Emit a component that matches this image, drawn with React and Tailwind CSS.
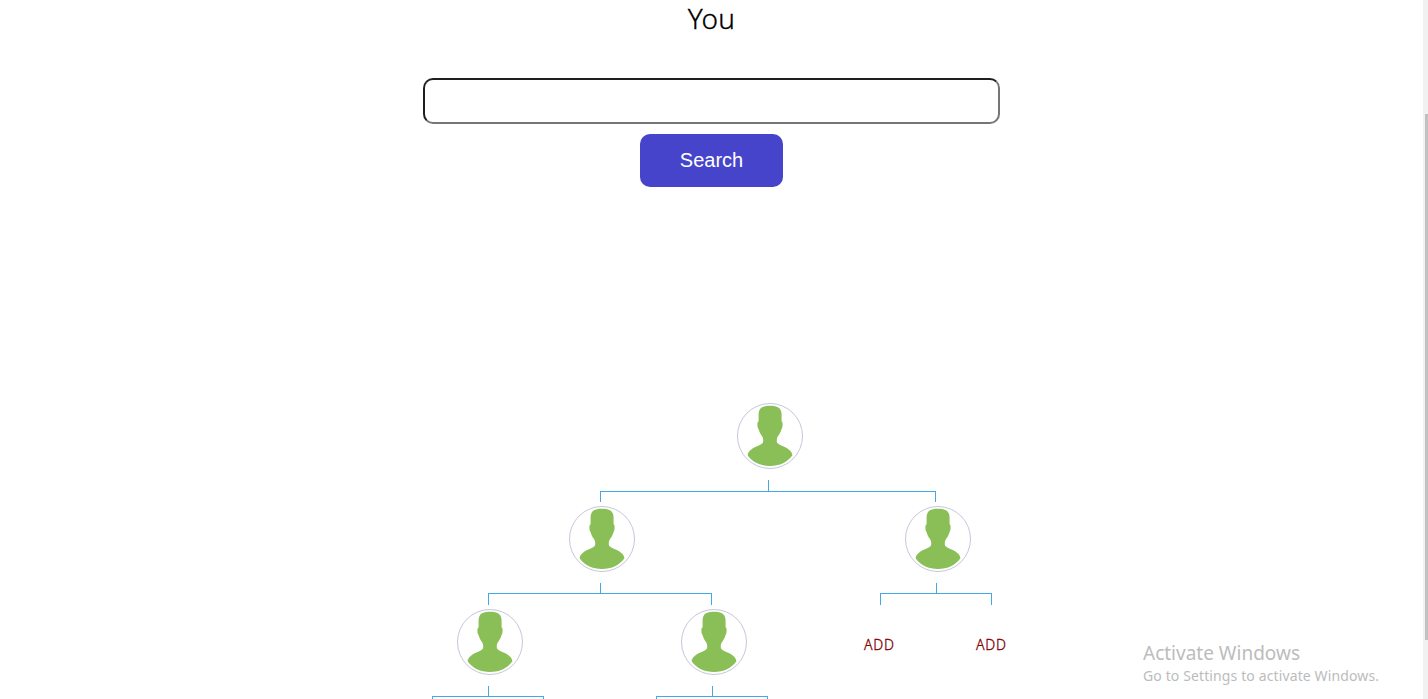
const members = [
  { id: "root", place: "left-[737px] top-[205px]" },
  { id: "left", place: "left-[569px] top-[308px]" },
  { id: "right", place: "left-[905px] top-[308px]" },
  { id: "left-left", place: "left-[457px] top-[411px]" },
  { id: "left-right", place: "left-[681px] top-[411px]" },
];

const openSlots = [
  { id: "right-left", place: "left-[864px] top-[437px]" },
  { id: "right-right", place: "left-[976px] top-[437px]" },
];

function Avatar({ place }) {
  return (
    <div className={`absolute size-[66px] rounded-full border border-[#c4c8dc] bg-white ${place}`}>
      <svg viewBox="1 1 64 64" className="block size-full" aria-hidden="true">
        <path
          fill="#8abf58"
          d="M33 2.8C38.5 2.8 41.4 4 43.1 6.2C44.3 7.9 44.6 9.8 44.6 12V18.2C45.4 18.8 45.7 20 45.6 21.8C45.5 24 45.2 25.2 44.5 26.2C43.8 28.8 42.6 30.8 41.4 32.6C40.2 34.4 39.8 35.4 39.8 37V38.2C39.8 39.8 41.3 41.2 44.2 42.6C47.6 44.1 50.4 45.2 52.6 47.2C54.2 48.6 55.2 50.2 55.4 52.2C50.6 59.2 42.6 62.9 33 62.9C23.4 62.9 15.4 59.2 10.6 52.2C10.8 50.2 11.8 48.6 13.4 47.2C15.6 45.2 18.4 44.1 21.8 42.6C24.7 41.2 26.2 39.8 26.2 38.2V37C26.2 35.4 25.8 34.4 24.6 32.6C23.4 30.8 22.3 28.8 21.6 26.2C20.8 25.2 20.5 24 20.4 21.8C20.3 20 20.7 18.8 21.6 18.2V12C21.6 9.8 21.8 7.9 23 6.2C24.7 4 27.5 2.8 33 2.8Z"
        />
      </svg>
    </div>
  );
}

function Connectors() {
  return (
    <svg
      className="absolute left-0 top-0"
      width="1423"
      height="501"
      viewBox="0 198 1423 501"
      fill="none"
      stroke="#43a9e6"
      shapeRendering="crispEdges"
      aria-hidden="true"
    >
      <path d="M768.5 480V491M600.5 502V491.5H935.5V502" />
      <path d="M600.5 583V593M488.5 605V593.5H711.5V605" />
      <path d="M936.5 583V593M880.5 605V593.5H991.5V605" />
      <path d="M488.5 686V696M432.5 699V696.5H543.5V699" />
      <path d="M712.5 686V696M656.5 699V696.5H767.5V699" />
    </svg>
  );
}

export default function App() {
  return (
    <div className="relative flex h-[699px] w-full overflow-hidden bg-white font-['Noto_Sans',sans-serif] text-black">
      <main className="flex w-[1423px] flex-col">
        <header className="flex h-[198px] flex-col items-center">
          <h1 className="h-[38px] text-[28px] leading-[37px] font-light tracking-[0.3px] [-webkit-text-stroke:0.3px_black]">You</h1>
          <input
            type="text"
            aria-label="Search members"
            className="mt-10 h-[46px] w-[577px] rounded-[10px] border-2 border-t-[#1f1f1f] border-r-[#767676] border-b-[#767676] border-l-[#1f1f1f] bg-white px-3 text-xl outline-none"
          />
          <button
            type="button"
            className="mt-2.5 h-[53px] w-[143px] rounded-[10px] bg-[#4644cb] pb-0.5 font-['Liberation_Sans',sans-serif] text-xl text-white"
          >
            Search
          </button>
        </header>
        <section className="relative h-[501px]">
          <Connectors />
          {members.map((m) => (
            <Avatar key={m.id} place={m.place} />
          ))}
          {openSlots.map((s) => (
            <a
              key={s.id}
              href="#"
              className={`absolute text-sm leading-5 font-light tracking-[0.8px] text-[#800000] [-webkit-text-stroke:0.3px_#800000] ${s.place}`}
            >
              ADD
            </a>
          ))}
        </section>
      </main>
      <div className="flex w-[5px] flex-col items-end bg-[#f1f1f1] pt-[114px]">
        <div className="h-[526px] w-[3px] bg-[#c1c1c1]" />
      </div>
      <aside className="absolute left-[1143px] top-[640px] whitespace-nowrap text-[#bcbcbc]">
        <p className="text-[19px] leading-[26px]">Activate Windows</p>
        <p className="text-[14px] leading-5 tracking-[0.12px]">Go to Settings to activate Windows.</p>
      </aside>
    </div>
  );
}
